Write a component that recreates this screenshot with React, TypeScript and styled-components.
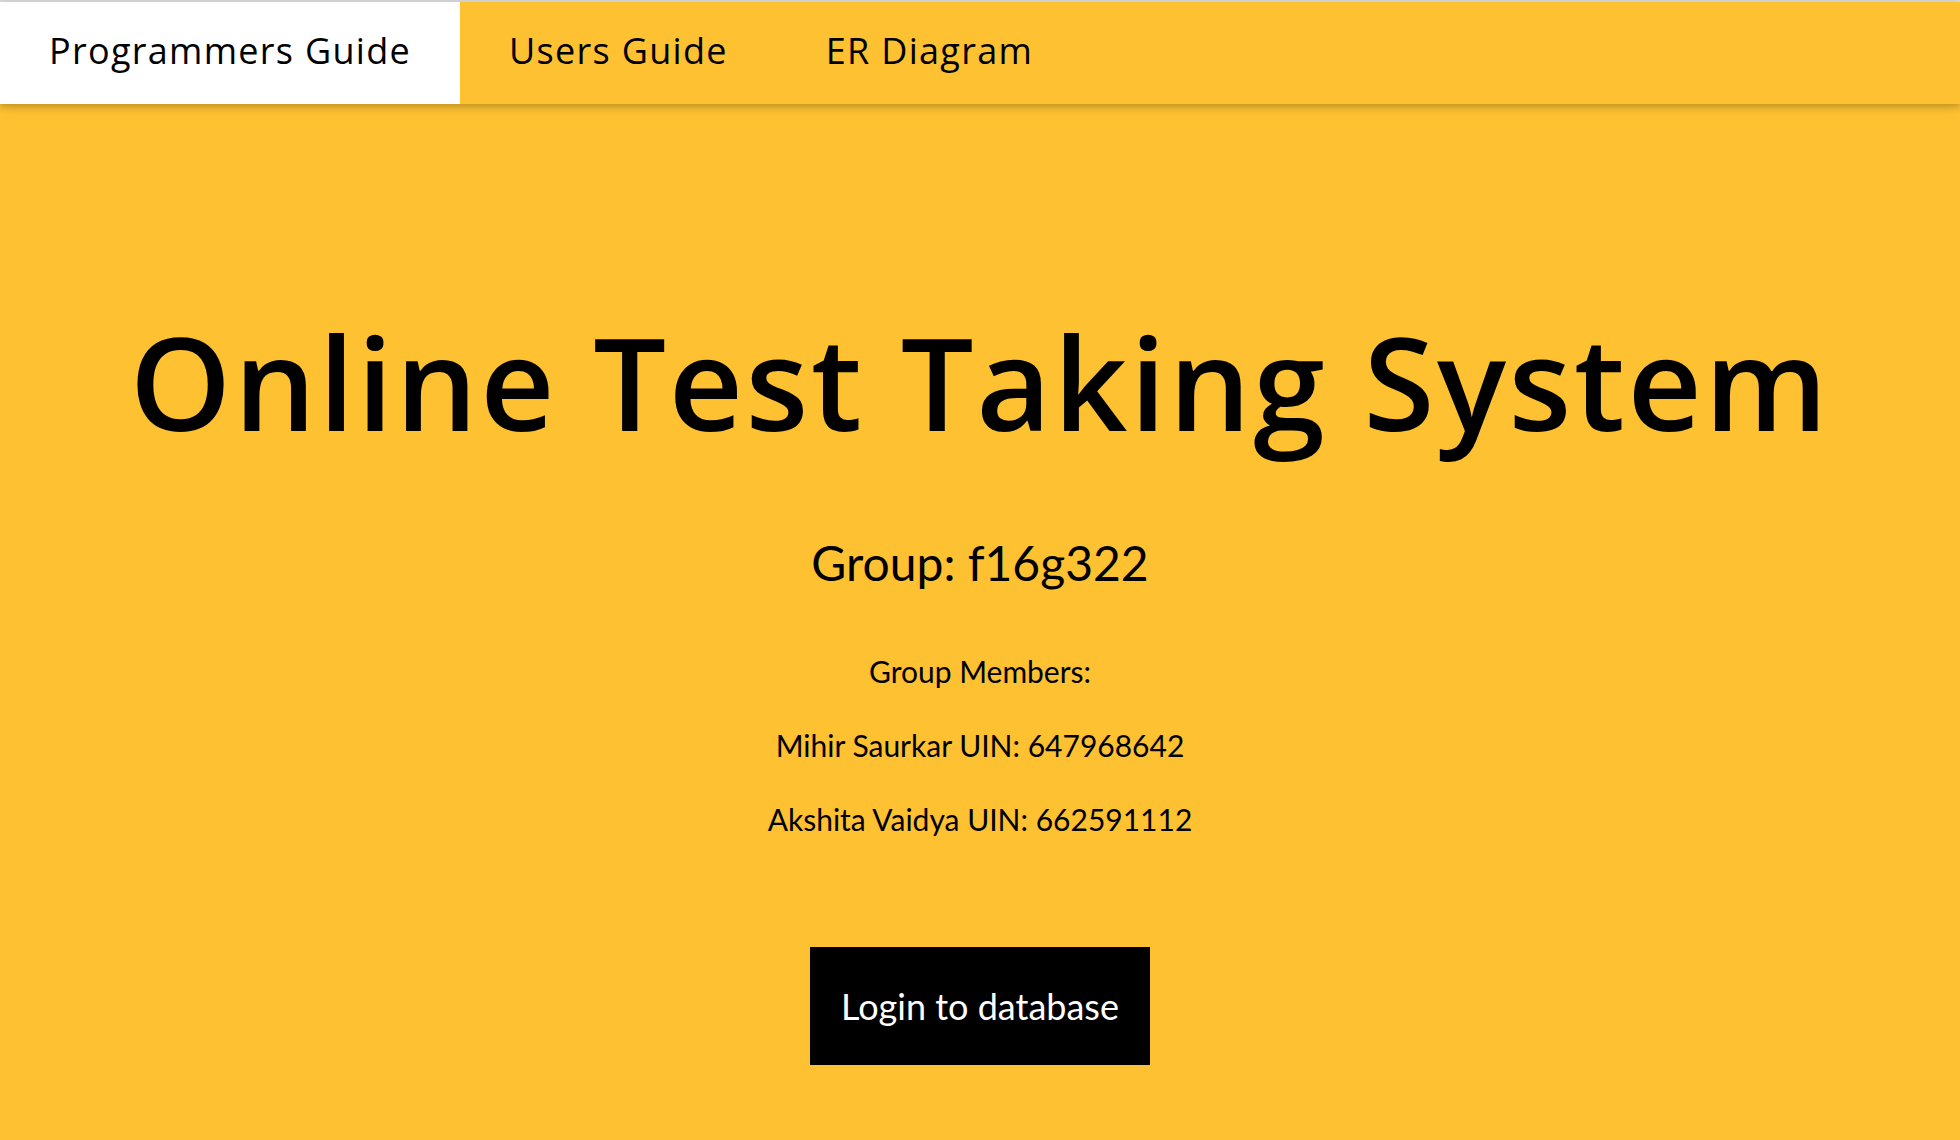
import React from "react";
import styled, { createGlobalStyle } from "styled-components";

const Global = createGlobalStyle`
  html, body { margin: 0; padding: 0; }
  body {
    background: #fdc131;
    font-family: Lato, "Open Sans", sans-serif;
    color: #000;
    min-height: 1140px;
  }
`;

const Page = styled.div`
  min-height: 1140px;
  background: #fdc131;
  border-top: 2px solid #dadada;
  box-sizing: border-box;
`;

const NavBar = styled.nav`
  display: flex;
  align-items: stretch;
  height: 102px;
  background: #fdc131;
  box-shadow: 0 3px 6px rgba(0, 0, 0, 0.16), 0 3px 12px rgba(0, 0, 0, 0.1);
  position: relative;
  z-index: 1;
`;

const NavItem = styled.a<{ $active?: boolean }>`
  display: flex;
  align-items: center;
  padding: 0 49px 6px;
  background: ${(p) => (p.$active ? "#ffffff" : "transparent")};
  color: #000;
  text-decoration: none;
  font-family: "Open Sans", sans-serif;
  font-weight: 500;
  font-size: 36px;
  letter-spacing: 1.3px;
  white-space: nowrap;
`;

const Hero = styled.header`
  display: flex;
  flex-direction: column;
  align-items: center;
  text-align: center;
  padding-top: 212px;
`;

const Title = styled.h1`
  margin: 0;
  font-family: "Open Sans", sans-serif;
  font-weight: 600;
  font-size: 129px;
  line-height: 130px;
  letter-spacing: 2.6px;
  white-space: nowrap;
`;

const GroupName = styled.h2`
  margin: 88px 0 0;
  font-family: Lato, sans-serif;
  font-weight: 400;
  font-size: 48px;
  line-height: 58px;
`;

const Members = styled.div`
  display: flex;
  flex-direction: column;
  margin-top: 42px;
`;

const MemberLine = styled.p`
  margin: 0;
  font-family: Lato, sans-serif;
  font-size: 30px;
  line-height: 74px;
`;

const LoginButton = styled.button`
  margin-top: 91px;
  width: 340px;
  height: 118px;
  border: none;
  background: #000;
  color: #fff;
  font-family: Lato, sans-serif;
  font-size: 36px;
  cursor: pointer;
  padding: 0;
`;

export default function App() {
  return (
    <Page>
      <Global />
      <NavBar>
        <NavItem $active href="#">Programmers Guide</NavItem>
        <NavItem href="#">Users Guide</NavItem>
        <NavItem href="#">ER Diagram</NavItem>
      </NavBar>
      <Hero>
        <Title>Online Test Taking System</Title>
        <GroupName>Group: f16g322</GroupName>
        <Members>
          <MemberLine>Group Members:</MemberLine>
          <MemberLine>Mihir Saurkar UIN: 647968642</MemberLine>
          <MemberLine>Akshita Vaidya UIN: 662591112</MemberLine>
        </Members>
        <LoginButton>Login to database</LoginButton>
      </Hero>
    </Page>
  );
}
